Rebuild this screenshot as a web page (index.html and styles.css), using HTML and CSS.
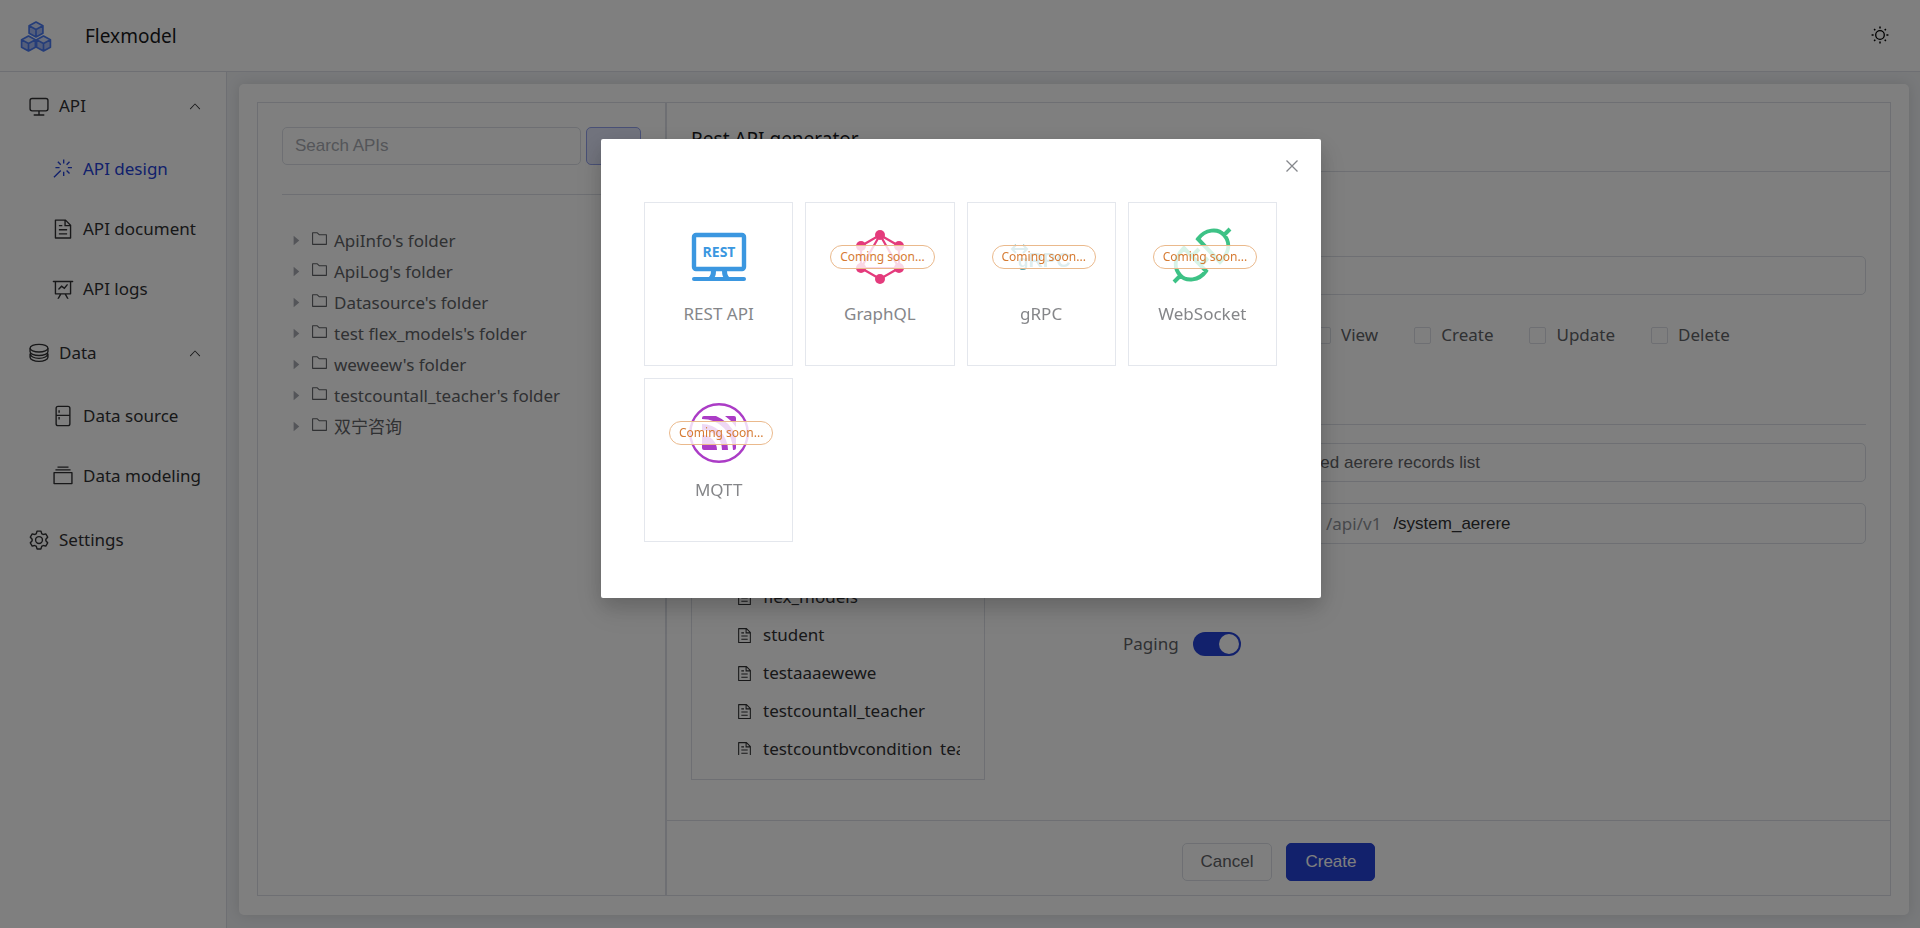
FILE: index.html
```html
<!DOCTYPE html>
<html lang="en">
<head>
<meta charset="utf-8">
<title>Flexmodel</title>
<link rel="stylesheet" href="styles.css">
</head>
<body>
<svg class="sprite" aria-hidden="true">
  <symbol id="i-doc" viewBox="0 0 1024 1024"><path d="M832 384H576V128H192v768h640V384zm-26.496-64L640 154.496V320h165.504zM160 64h480l256 256v608a32 32 0 0 1-32 32H160a32 32 0 0 1-32-32V96a32 32 0 0 1 32-32zm160 448h384v64H320v-64zm0-192h160v64H320v-64zm0 384h384v64H320v-64z"/></symbol>
  <symbol id="i-up" viewBox="0 0 1024 1024"><path d="m488.832 344.32-339.84 356.672a32 32 0 0 0 0 44.16l.384.384a29.44 29.44 0 0 0 42.688 0l320-335.872 319.872 335.872a29.44 29.44 0 0 0 42.688 0l.384-.384a32 32 0 0 0 0-44.16L535.168 344.32a32 32 0 0 0-46.336 0z"/></symbol>
  <symbol id="i-folder" viewBox="0 0 1024 1024"><path d="M128 192v640h768V320H485.76L357.504 192H128zm-32-64h287.872l128.384 128H928a32 32 0 0 1 32 32v576a32 32 0 0 1-32 32H96a32 32 0 0 1-32-32V160a32 32 0 0 1 32-32z"/></symbol>
  <symbol id="i-caret" viewBox="0 0 1024 1024"><path d="M384 192v640l384-320.064z"/></symbol>
  <symbol id="i-cube" viewBox="0 0 16 16"><path d="M8 1 14.500 4.500V11.500L8 15 1.500 11.500V4.500Z" fill="#a9bdf6"/><path d="M8 1 14.500 4.500 8 8 1.500 4.500Z" fill="#d5dffb"/><path d="M8 1 14.500 4.500V11.500L8 15 1.500 11.500V4.500ZM1.500 4.500 8 8 14.500 4.500M8 8V15" fill="none" stroke="#4b7bf2" stroke-width="1.600" stroke-linejoin="round"/></symbol>
</svg>

<div class="app">
  <header class="topbar">
    <svg class="logo" viewBox="0 0 32 32" aria-hidden="true">
      <use href="#i-cube" x="7.500" y="1" width="17" height="17"/>
      <use href="#i-cube" x="0" y="15" width="17" height="17"/>
      <use href="#i-cube" x="15" y="15" width="17" height="17"/>
    </svg>
    <span class="brand">Flexmodel</span>
    <button class="theme" type="button" aria-label="Toggle theme">
      <svg viewBox="0 0 18 18" fill="none" stroke="currentColor" stroke-width="1.300"><circle cx="9" cy="9" r="4.300"/><path d="M9 .6v2M9 15.400v2M.6 9h2M15.400 9h2M3.100 3.100l1.200 1.200M13.700 13.700l1.200 1.200M3.100 14.900l1.200-1.200M13.700 4.300l1.200-1.200" stroke-width="1.500"/></svg>
    </button>
  </header>

  <nav class="sidebar" aria-label="Main">
    <button class="nav-group" type="button" aria-expanded="true">
      <span class="nav-icon"><svg viewBox="0 0 1024 1024"><path d="M544 768v128h192a32 32 0 1 1 0 64H288a32 32 0 1 1 0-64h192V768H192A128 128 0 0 1 64 640V256a128 128 0 0 1 128-128h640a128 128 0 0 1 128 128v384a128 128 0 0 1-128 128H544zM192 192a64 64 0 0 0-64 64v384a64 64 0 0 0 64 64h640a64 64 0 0 0 64-64V256a64 64 0 0 0-64-64H192z"/></svg></span>
      API<svg class="chevron"><use href="#i-up"/></svg>
    </button>
    <a class="nav-item active" href="#design">
      <span class="nav-icon"><svg viewBox="0 0 1024 1024"><path d="M512 64h64v192h-64V64zm0 576h64v192h-64V640zM160 480v-64h192v64H160zm576 0v-64h192v64H736zM249.856 199.040l45.248-45.184L430.848 289.600 385.600 334.848 249.856 199.104zM657.152 606.400l45.248-45.248 135.744 135.744-45.248 45.248L657.152 606.400zM114.048 923.200 68.800 877.952l316.800-316.800 45.248 45.248-316.800 316.800zM702.400 334.848 657.152 289.600l135.744-135.744 45.248 45.248L702.400 334.848z"/></svg></span>
      API design
    </a>
    <a class="nav-item" href="#document">
      <span class="nav-icon"><svg><use href="#i-doc"/></svg></span>
      API document
    </a>
    <a class="nav-item" href="#logs">
      <span class="nav-icon"><svg viewBox="0 0 1024 1024"><path d="M359.168 768H160a32 32 0 0 1-32-32V192H64a32 32 0 0 1 0-64h896a32 32 0 1 1 0 64h-64v544a32 32 0 0 1-32 32H665.216l110.848 192h-73.856L591.360 768H433.024L322.176 960H248.320l110.848-192zM832 192H192v512h640V192zM342.656 534.656a32 32 0 1 1-45.312-45.312L444.992 341.760l125.440 94.080L679.040 300.032a32 32 0 1 1 49.920 39.936L581.632 524.224 451.008 426.240 342.656 534.592z"/></svg></span>
      API logs
    </a>
    <button class="nav-group" type="button" aria-expanded="true">
      <span class="nav-icon"><svg viewBox="0 0 1024 1024" class="line"><ellipse cx="512" cy="288" rx="416" ry="180"/><path d="M96 288v160c0 100 186 180 416 180s416-80 416-180V288M96 540v170c0 100 186 190 416 190s416-90 416-190V540M96 540c0 130 186 220 416 220s416-90 416-220"/></svg></span>
      Data<svg class="chevron"><use href="#i-up"/></svg>
    </button>
    <a class="nav-item" href="#source">
      <span class="nav-icon"><svg viewBox="0 0 1024 1024" class="line"><rect x="192" y="64" width="640" height="896" rx="90"/><path d="M192 480h640M330 250v110M330 560v110"/></svg></span>
      Data source
    </a>
    <a class="nav-item" href="#modeling">
      <span class="nav-icon"><svg viewBox="0 0 1024 1024"><path d="M128 384v448h768V384H128zm-32-64h832a32 32 0 0 1 32 32v512a32 32 0 0 1-32 32H96a32 32 0 0 1-32-32V352a32 32 0 0 1 32-32zm64-128h704v64H160zm96-128h512v64H256z"/></svg></span>
      Data modeling
    </a>
    <a class="nav-group" href="#settings">
      <span class="nav-icon"><svg viewBox="0 0 1024 1024"><path d="M600.704 64a32 32 0 0 1 30.464 22.208l35.200 109.376c14.784 7.232 28.928 15.360 42.432 24.512l112.384-24.192a32 32 0 0 1 34.432 15.360L944.320 364.800a32 32 0 0 1-4.032 37.504l-77.120 85.120a357.120 357.120 0 0 1 0 49.024l77.120 85.248a32 32 0 0 1 4.032 37.504l-88.704 153.600a32 32 0 0 1-34.432 15.296L708.800 803.904c-13.440 9.088-27.648 17.280-42.368 24.512l-35.264 109.376A32 32 0 0 1 600.704 960H423.296a32 32 0 0 1-30.464-22.208L357.696 828.480a351.616 351.616 0 0 1-42.560-24.640l-112.320 24.256a32 32 0 0 1-34.432-15.360L79.680 659.200a32 32 0 0 1 4.032-37.504l77.120-85.248a357.120 357.120 0 0 1 0-48.896l-77.120-85.248A32 32 0 0 1 79.680 364.800l88.704-153.600a32 32 0 0 1 34.432-15.296l112.320 24.256c13.568-9.152 27.776-17.408 42.560-24.640l35.200-109.312A32 32 0 0 1 423.232 64H600.640zm-23.424 64H446.720l-36.352 113.088-24.512 11.968a294.113 294.113 0 0 0-34.816 20.096l-22.656 15.360-116.224-25.088-65.280 113.152 79.680 88.192-1.920 27.136a293.120 293.120 0 0 0 0 40.192l1.920 27.136-79.808 88.192 65.344 113.152 116.224-25.024 22.656 15.296a294.113 294.113 0 0 0 34.816 20.096l24.512 11.968L446.720 896h130.688l36.480-113.152 24.448-11.904a288.282 288.282 0 0 0 34.752-20.096l22.592-15.296 116.288 25.024 65.280-113.152-79.744-88.192 1.920-27.136a293.120 293.120 0 0 0 0-40.256l-1.920-27.136 79.808-88.128-65.344-113.152-116.288 24.960-22.592-15.232a287.616 287.616 0 0 0-34.752-20.096l-24.448-11.904L577.344 128zM512 320a192 192 0 1 1 0 384 192 192 0 0 1 0-384zm0 64a128 128 0 1 0 0 256 128 128 0 0 0 0-256z"/></svg></span>
      Settings
    </a>
  </nav>

  <main class="main">
    <div class="page">
      <div class="split">
        <section class="apis" aria-label="APIs">
          <div class="search">
            <input class="input" type="search" placeholder="Search APIs" aria-label="Search APIs">
            <button class="add" type="button" aria-label="Add API"></button>
          </div>
          <ul class="tree">
            <li><svg class="caret"><use href="#i-caret"/></svg><svg class="folder"><use href="#i-folder"/></svg>ApiInfo's folder</li>
            <li><svg class="caret"><use href="#i-caret"/></svg><svg class="folder"><use href="#i-folder"/></svg>ApiLog's folder</li>
            <li><svg class="caret"><use href="#i-caret"/></svg><svg class="folder"><use href="#i-folder"/></svg>Datasource's folder</li>
            <li><svg class="caret"><use href="#i-caret"/></svg><svg class="folder"><use href="#i-folder"/></svg>test flex_models's folder</li>
            <li><svg class="caret"><use href="#i-caret"/></svg><svg class="folder"><use href="#i-folder"/></svg>weweew's folder</li>
            <li><svg class="caret"><use href="#i-caret"/></svg><svg class="folder"><use href="#i-folder"/></svg>testcountall_teacher's folder</li>
            <li><svg class="caret"><use href="#i-caret"/></svg><svg class="folder"><use href="#i-folder"/></svg>双宁咨询</li>
          </ul>
        </section>

        <section class="generator">
          <h1 class="generator-title">Rest API generator</h1>
          <div class="generator-body">
            <div class="models">
              <ul class="model-list">
                <li><svg><use href="#i-doc"/></svg>flex_models</li>
                <li><svg><use href="#i-doc"/></svg>student</li>
                <li><svg><use href="#i-doc"/></svg>testaaaewewe</li>
                <li><svg><use href="#i-doc"/></svg>testcountall_teacher</li>
                <li><svg><use href="#i-doc"/></svg>testcountbycondition_teacher</li>
              </ul>
            </div>
            <form class="form">
              <input class="input" type="text" aria-label="Model">
              <div class="checks">
                <label><input type="checkbox">View</label>
                <label><input type="checkbox">Create</label>
                <label><input type="checkbox">Update</label>
                <label><input type="checkbox">Delete</label>
              </div>
              <hr class="rule">
              <input class="input" type="text" value="Search paginated aerere records list" aria-label="Name">
              <label class="path"><span>/api/v1</span><input type="text" value="/system_aerere"></label>
              <label class="paging"><span>Paging</span><input class="switch" type="checkbox" role="switch" checked></label>
            </form>
          </div>
          <footer class="actions">
            <button class="btn" type="button">Cancel</button>
            <button class="btn primary" type="button">Create</button>
          </footer>
        </section>
      </div>
    </div>
  </main>
</div>

<div class="overlay">
  <div class="dialog" role="dialog" aria-modal="true" aria-label="API type">
    <button class="close" type="button" aria-label="Close"><svg viewBox="0 0 12 12"><path d="M.5.5l11 11M11.500.5l-11 11" fill="none" stroke="currentColor" stroke-width="1.300"/></svg></button>
    <div class="types">
      <button class="type" type="button">
        <svg viewBox="0 0 60 60"><rect x="5" y="8" width="50" height="34" rx="2" fill="none" stroke="#3b97e0" stroke-width="4.400"/><path d="M22 44h5q0 6-3 8h-7q5-2 5-8zM38 44h-5q0 6 3 8h7q-5-2-5-8z" fill="#3b97e0"/><path d="M5 52h50" stroke="#3b97e0" stroke-width="4" stroke-linecap="round"/><text class="rest-mark" x="30" y="30" text-anchor="middle">REST</text></svg>
        <span>REST API</span>
      </button>
      <button class="type" type="button">
        <svg viewBox="0 0 60 60"><g fill="#e43b7c"><path d="M30 8 49 19V41L30 52 11 41V19ZM30 8 11 41H49Z" fill="none" stroke="#e43b7c" stroke-width="2.200"/><circle cx="30" cy="8" r="5"/><circle cx="49" cy="19" r="5"/><circle cx="49" cy="41" r="5"/><circle cx="30" cy="52" r="5"/><circle cx="11" cy="41" r="5"/><circle cx="11" cy="19" r="5"/></g></svg>
        <span>GraphQL</span>
        <em class="soon">Coming soon...</em>
      </button>
      <button class="type" type="button">
        <svg viewBox="0 0 60 60"><path d="M1 22h15M5 18l-4 4 4 4M12 18l4 4-4 4" fill="none" stroke="#5aa7ad" stroke-width="2"/><text class="grpc-mark" x="7" y="40"><tspan class="grpc-g">g</tspan>RPC</text></svg>
        <span>gRPC</span>
        <em class="soon">Coming soon...</em>
      </button>
      <button class="type" type="button">
        <svg viewBox="0 0 60 60"><g fill="none" stroke="#3dc286" stroke-width="4"><path d="M26 12C33 2 46 1 52 8C59 16 57 26 48 35ZM51 9l7-7M34 44C27 54 14 55 8 48C1 40 3 30 12 21ZM9 48l-7 7M19 30l8-8M28 39l8-8"/></g></svg>
        <span>WebSocket</span>
        <em class="soon">Coming soon...</em>
      </button>
      <button class="type" type="button">
        <svg viewBox="0 0 60 60"><circle cx="30" cy="30" r="28.700" fill="none" stroke="#ab3cc6" stroke-width="2.400"/><path fill="#ab3cc6" d="M13 32a15 15 0 0 1 15 15H15a2 2 0 0 1-2-2zM13 21a26 26 0 0 1 26 26h-6a20 20 0 0 0-20-20zM15 13H27A37 37 0 0 1 47 33V45a2 2 0 0 1-2 2h-1A31 31 0 0 0 13 16V15a2 2 0 0 1 2-2zM36 13h9a2 2 0 0 1 2 2v9A41 41 0 0 0 36 13z"/></svg>
        <span>MQTT</span>
        <em class="soon">Coming soon...</em>
      </button>
    </div>
  </div>
</div>
</body>
</html>
```

FILE: styles.css
```css
* { box-sizing: border-box; }

:root {
  --primary: #2442d8;
  --line: #dcdfe6;
  --line-soft: #e4e7ed;
  --text: #303133;
  --text-regular: #606266;
  --ui: "Noto Sans", "Noto Sans CJK SC", sans-serif;
  --control: "Liberation Sans", Arial, sans-serif;
}

body {
  margin: 0;
  font: 17px/24px var(--ui);
  color: var(--text);
}

button, input { font: inherit; color: inherit; }
button { cursor: pointer; }
a { color: inherit; text-decoration: none; }
ul { list-style: none; margin: 0; padding: 0; }
svg { fill: currentColor; flex: none; }
.sprite { display: none; }
.line { fill: none; stroke: currentColor; stroke-width: 64; }

.app {
  display: grid;
  grid-template: auto 1fr / 227px 1fr;
  height: 100vh;
}

.topbar {
  grid-column: 1 / -1;
  display: flex;
  align-items: center;
  height: 72px;
  padding: 0 28px 0 20px;
  border-bottom: 1px solid var(--line);
}
.logo { width: 32px; height: 32px; }
.brand { margin-left: 33px; font-size: 19px; color: #18191b; }
.theme {
  display: flex;
  margin: 0 0 2px auto;
  padding: 3px;
  border: 0;
  background: none;
  color: #000;
}
.theme svg { width: 18px; height: 18px; fill: none; }

.sidebar { border-right: 1px solid var(--line); }
.nav-group, .nav-item {
  display: flex;
  align-items: center;
  gap: 6px;
  width: 100%;
  border: 0;
  background: none;
  text-align: left;
  white-space: nowrap;
}
.nav-group { height: 67px; padding: 0 24px; }
.nav-item { height: 60px; padding: 0 0 0 48px; }
.nav-item.active { color: var(--primary); }
.nav-icon { display: flex; justify-content: center; width: 29px; }
.nav-icon svg { width: 22px; height: 22px; }
.chevron { width: 14px; height: 14px; margin-left: auto; }

.main { padding: 12px 11px 13px 12px; background: #f0f2f5; min-width: 0; min-height: 0; }
.page {
  height: 100%;
  padding: 18px 18px 19px;
  background: #fff;
  border-radius: 5px;
  box-shadow: 0 0 14px rgba(0, 0, 0, .12);
}
.split {
  display: grid;
  grid-template-columns: 409px 1fr;
  height: 100%;
  border: 1px solid var(--line);
}

.apis { padding: 24px; border-right: 2px solid var(--line); }
.search {
  display: flex;
  gap: 5px;
  padding-bottom: 29px;
  border-bottom: 1px solid var(--line);
}
.input {
  width: 100%;
  min-width: 0;
  height: 38px;
  padding: 0 12px;
  border: 1px solid var(--line);
  border-radius: 5px;
  background: none;
  font-family: var(--control);
  color: var(--text-regular);
}
.input::placeholder { color: #a8abb2; }
.add {
  flex: none;
  width: 55px;
  border: 1px solid #92a1ec;
  border-radius: 5px;
  background: #e3e7fb;
}
.tree { padding-top: 30px; color: var(--text-regular); }
.tree li { display: flex; align-items: center; height: 31px; padding-left: 6px; }
.caret { width: 15px; height: 15px; color: #a8abb2; }
.folder { width: 17px; height: 17px; margin: 0 6px 4px 8px; }

.generator { display: flex; flex-direction: column; min-width: 0; min-height: 0; }
.generator-title {
  margin: 0;
  padding: 24px 24px 20px;
  border-bottom: 1px solid var(--line);
  font-size: 19px;
  font-weight: 400;
  color: #18191b;
}
.generator-body {
  flex: 1;
  display: grid;
  grid-template-columns: 294px 1fr;
  gap: 208px;
  padding: 24px 24px 40px;
  min-height: 0;
}
.models {
  display: flex;
  padding: 24px;
  border: 1px solid var(--line);
  min-height: 0;
}
.model-list { flex: 1; padding-top: 357px; overflow: hidden; }
.model-list li {
  display: flex;
  align-items: center;
  gap: 10px;
  height: 38px;
  padding-left: 20px;
  white-space: nowrap;
}
.model-list svg { width: 17px; height: 17px; }

.form { padding-top: 60px; }
.form > .input { height: 39px; }
.checks {
  display: flex;
  gap: 36px;
  padding: 28px 0 28px 121px;
  color: var(--text-regular);
}
.checks label { display: flex; align-items: center; gap: 10px; }
.checks input {
  appearance: none;
  width: 17px;
  height: 17px;
  margin: 0;
  border: 1px solid var(--line);
  border-radius: 2px;
}
.rule { margin: 49px 0 18px; border: 0; border-top: 1px solid var(--line); }
.path {
  display: flex;
  align-items: center;
  gap: 12px;
  height: 41px;
  margin-top: 21px;
  padding-left: 132px;
  border: 1px solid var(--line);
  border-radius: 5px;
}
.path span { color: #909399; }
.path input {
  flex: 1;
  min-width: 0;
  padding: 0;
  border: 0;
  background: none;
  font-family: var(--control);
  color: var(--text);
}
.paging {
  display: flex;
  align-items: center;
  gap: 14px;
  width: fit-content;
  margin: 88px 0 0 -70px;
  color: var(--text-regular);
}
.switch {
  appearance: none;
  display: flex;
  justify-content: flex-end;
  width: 48px;
  height: 24px;
  margin: 0;
  padding: 2px;
  border-radius: 12px;
  background: var(--primary);
}
.switch::before { content: ""; width: 20px; border-radius: 50%; background: #fff; }

.actions {
  display: flex;
  justify-content: center;
  gap: 14px;
  padding: 22px 0 14px;
  border-top: 1px solid var(--line);
}
.btn {
  height: 38px;
  padding: 0 18px;
  border: 1px solid var(--line);
  border-radius: 5px;
  background: none;
  font-family: var(--control);
  color: var(--text-regular);
}
.btn.primary { border-color: var(--primary); background: var(--primary); color: #fff; }

.overlay {
  position: fixed;
  inset: 0;
  padding-top: 139px;
  background: rgba(0, 0, 0, .5);
}
.dialog {
  position: relative;
  width: 720px;
  margin: 0 auto 0 601px;
  padding: 63px 44px 56px 43px;
  border-radius: 2px;
  background: #fff;
  box-shadow: 0 12px 32px 4px rgba(0, 0, 0, .08), 0 8px 20px rgba(0, 0, 0, .16);
}
.close {
  position: absolute;
  top: 14px;
  right: 16px;
  display: flex;
  padding: 6px;
  border: 0;
  background: none;
  color: #85878c;
}
.close svg { width: 12px; height: 12px; margin: 1px; }
.types { display: grid; grid-template-columns: repeat(4, 1fr); gap: 12px; }
.type {
  position: relative;
  display: flex;
  flex-direction: column;
  align-items: center;
  gap: 15px;
  padding: 24px 0 39px;
  border: 1px solid var(--line-soft);
  background: #fff;
  color: #858689;
}
.type svg { width: 60px; height: 60px; overflow: visible; }
.rest-mark { font: bold 14px "Open Sans", sans-serif; fill: #3b97e0; }
.grpc-mark { font: bold 20px "Liberation Sans", sans-serif; fill: #5aa7ad; }
.grpc-g { font-size: 17px; }
.soon {
  position: absolute;
  top: 42px;
  left: 24px;
  padding: 0 9px;
  border: 1px solid #eab98c;
  border-radius: 12px;
  background: rgba(255, 255, 255, .8);
  font: 12px/22px var(--ui);
  color: #d67b33;
}
```
